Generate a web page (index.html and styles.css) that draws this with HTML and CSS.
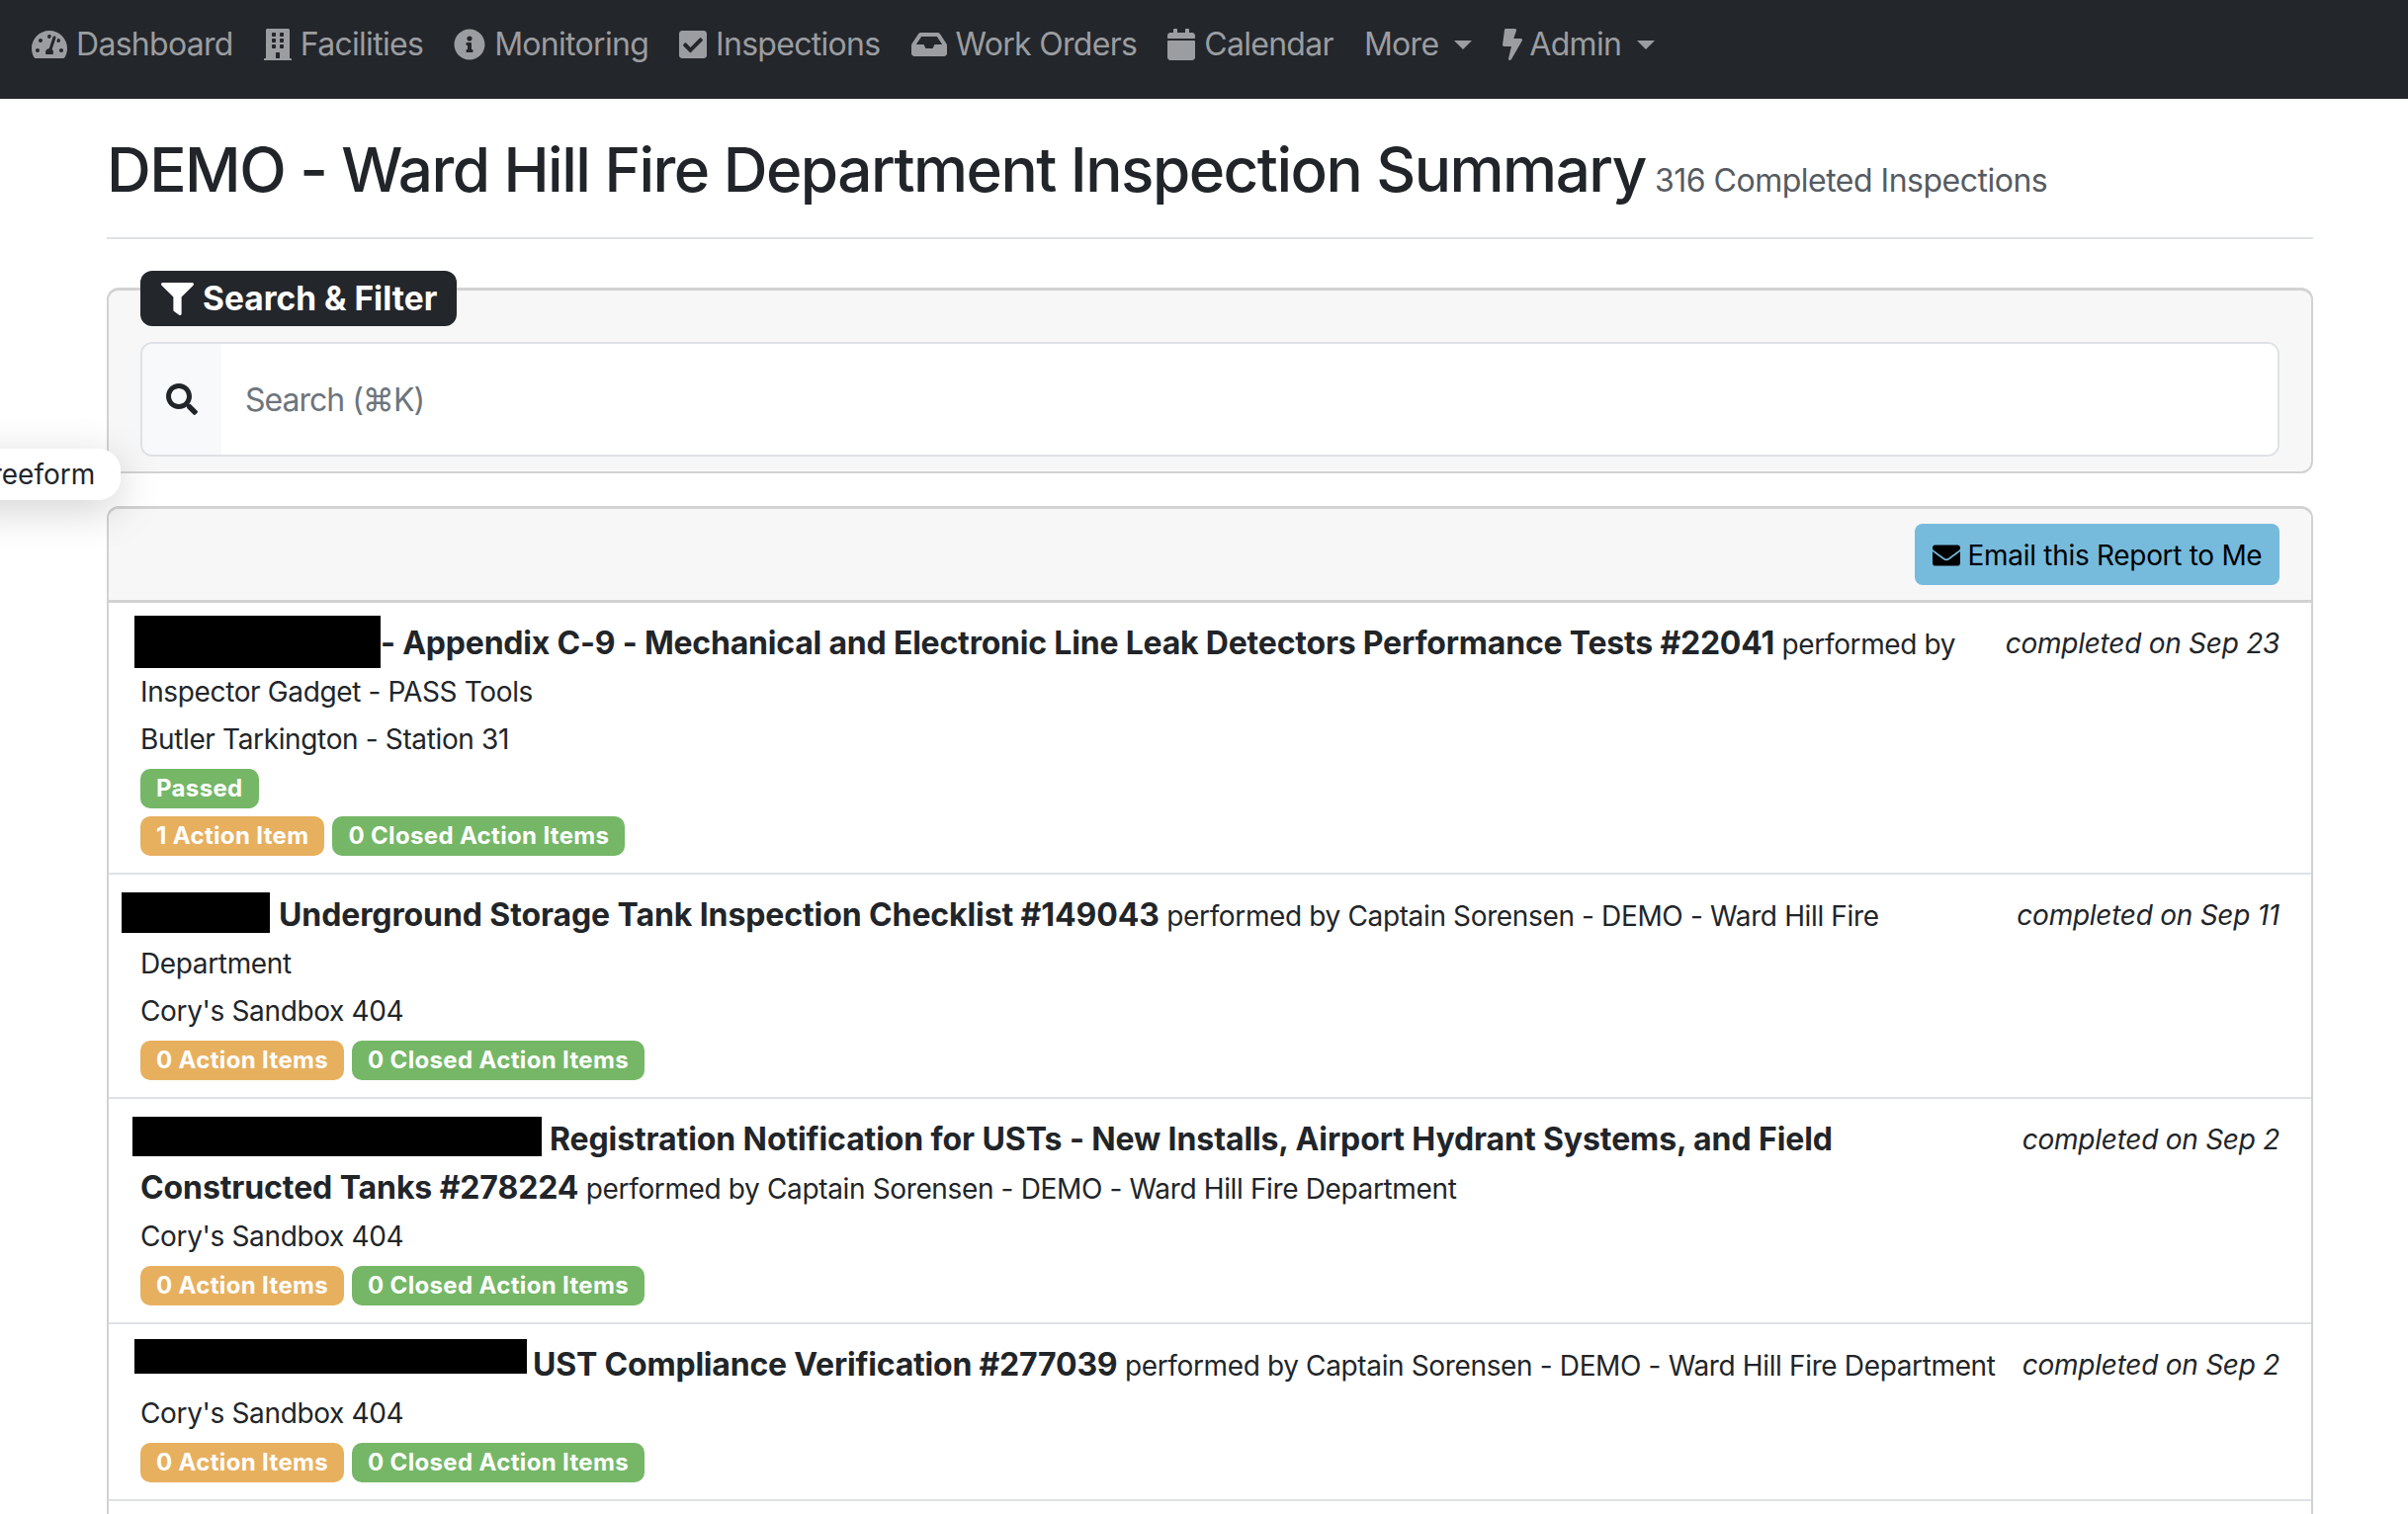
FILE: index.html
```html
<!DOCTYPE html>
<html lang="en">
<head>
    <meta charset="UTF-8">
    <meta name="viewport" content="width=device-width, initial-scale=1.0">
    <title>Inspection Summary</title>
    <link rel="stylesheet" href="styles.css">
</head>
<body>
    <!-- Top navigation -->
    <nav class="navbar">
        <a class="nav-link"><svg class="icon icon-dash" viewBox="0 0 576 512"><path d="M288 32C128.94 32 0 160.94 0 320c0 52.8 14.25 102.26 39.06 144.8 5.61 9.62 16.3 15.2 27.44 15.2h443c11.14 0 21.83-5.58 27.44-15.2C561.75 422.26 576 372.8 576 320c0-159.06-128.94-288-288-288zm0 64c14.71 0 26.58 10.13 30.32 23.65-1.11 2.26-2.64 4.23-3.45 6.67l-9.22 27.67c-5.13 3.49-10.97 6.01-17.64 6.01-17.67 0-32-14.33-32-32S270.33 96 288 96zM96 384c-17.67 0-32-14.33-32-32s14.33-32 32-32 32 14.33 32 32-14.33 32-32 32zm48-160c-17.67 0-32-14.33-32-32s14.33-32 32-32 32 14.33 32 32-14.33 32-32 32zm246.77-72.41l-61.33 184C343.13 347.33 352 364.54 352 384c0 11.72-3.38 22.55-8.88 32H232.88c-5.5-9.45-8.88-20.28-8.88-32 0-33.94 26.5-61.43 59.9-63.59l61.34-184.01c4.17-12.56 17.73-19.45 30.36-15.17 12.57 4.19 19.35 17.77 15.17 30.36zm14.66 57.2l15.52-46.55c3.47-1.29 7.13-2.23 11.05-2.23 17.67 0 32 14.33 32 32s-14.33 32-32 32c-11.38-.01-20.89-6.28-26.57-15.22zM480 384c-17.67 0-32-14.33-32-32s14.33-32 32-32 32 14.33 32 32-14.33 32-32 32z"/></svg>Dashboard</a>
        <a class="nav-link"><svg class="icon icon-tall" viewBox="0 0 448 512"><path d="M436 480h-20V24c0-13.255-10.745-24-24-24H56C42.745 0 32 10.745 32 24v456H12c-6.627 0-12 5.373-12 12v20h448v-20c0-6.627-5.373-12-12-12zM128 76c0-6.627 5.373-12 12-12h40c6.627 0 12 5.373 12 12v40c0 6.627-5.373 12-12 12h-40c-6.627 0-12-5.373-12-12V76zm0 96c0-6.627 5.373-12 12-12h40c6.627 0 12 5.373 12 12v40c0 6.627-5.373 12-12 12h-40c-6.627 0-12-5.373-12-12v-40zm52 148h-40c-6.627 0-12-5.373-12-12v-40c0-6.627 5.373-12 12-12h40c6.627 0 12 5.373 12 12v40c0 6.627-5.373 12-12 12zm76 160h-64v-84c0-6.627 5.373-12 12-12h40c6.627 0 12 5.373 12 12v84zm64-172c0 6.627-5.373 12-12 12h-40c-6.627 0-12-5.373-12-12v-40c0-6.627 5.373-12 12-12h40c6.627 0 12 5.373 12 12v40zm0-96c0 6.627-5.373 12-12 12h-40c-6.627 0-12-5.373-12-12v-40c0-6.627 5.373-12 12-12h40c6.627 0 12 5.373 12 12v40zm0-96c0 6.627-5.373 12-12 12h-40c-6.627 0-12-5.373-12-12V76c0-6.627 5.373-12 12-12h40c6.627 0 12 5.373 12 12v40z"/></svg>Facilities</a>
        <a class="nav-link"><svg class="icon icon-info" viewBox="0 0 512 512"><path d="M256 8C119.043 8 8 119.083 8 256c0 136.997 111.043 248 248 248s248-111.003 248-248C504 119.083 392.957 8 256 8zm0 110c23.196 0 42 18.804 42 42s-18.804 42-42 42-42-18.804-42-42 18.804-42 42-42zm56 254c0 6.627-5.373 12-12 12h-88c-6.627 0-12-5.373-12-12v-24c0-6.627 5.373-12 12-12h12v-64h-12c-6.627 0-12-5.373-12-12v-24c0-6.627 5.373-12 12-12h64c6.627 0 12 5.373 12 12v100h12c6.627 0 12 5.373 12 12v24z"/></svg>Monitoring</a>
        <a class="nav-link"><svg class="icon icon-tall" viewBox="0 0 448 512"><path d="M400 480H48c-26.51 0-48-21.49-48-48V80c0-26.51 21.49-48 48-48h352c26.51 0 48 21.49 48 48v352c0 26.51-21.49 48-48 48zm-204.686-98.059l184-184c6.248-6.248 6.248-16.379 0-22.627l-22.627-22.627c-6.248-6.248-16.379-6.249-22.628 0L184 302.745l-69.059-69.059c-6.248-6.248-16.379-6.248-22.628 0L69.686 256.313c-6.248 6.248-6.248 16.379 0 22.627l104 104c6.249 6.25 16.379 6.25 22.628.001z"/></svg>Inspections</a>
        <a class="nav-link"><svg class="icon icon-inbox" viewBox="0 0 576 512"><path d="M567.938 243.908L462.25 85.374A48.003 48.003 0 0 0 422.311 64H153.689a48 48 0 0 0-39.938 21.374L8.062 243.908A47.994 47.994 0 0 0 0 270.533V400c0 26.51 21.49 48 48 48h480c26.51 0 48-21.49 48-48V270.533a47.994 47.994 0 0 0-8.062-26.625zM162.252 128h251.497l85.333 128H376l-32 64H232l-32-64H76.918l85.334-128z"/></svg>Work Orders</a>
        <a class="nav-link"><svg class="icon icon-tall" viewBox="0 0 448 512"><path d="M12 192h424c6.6 0 12 5.4 12 12v260c0 26.5-21.5 48-48 48H48c-26.5 0-48-21.5-48-48V204c0-6.6 5.4-12 12-12zm436-44v-36c0-26.5-21.5-48-48-48h-48V12c0-6.6-5.4-12-12-12h-40c-6.6 0-12 5.4-12 12v52H160V12c0-6.6-5.4-12-12-12h-40c-6.6 0-12 5.4-12 12v52H48C21.5 64 0 85.5 0 112v36c0 6.6 5.4 12 12 12h424c6.6 0 12-5.4 12-12z"/></svg>Calendar</a>
        <a class="nav-link dropdown">More</a>
        <a class="nav-link dropdown"><svg class="icon icon-bolt" viewBox="0 0 320 512"><path d="M296 160H180.6l42.6-129.8C227.2 15 215.7 0 200 0H56C44 0 33.8 8.9 32.2 20.8l-32 240C-1.7 275.2 9.5 288 24 288h118.7L96.6 482.5c-3.6 15.2 8 29.5 23.3 29.5 8.4 0 16.4-4.4 20.8-12l176-304c9.3-15.9-2.2-36-20.7-36z"/></svg>Admin</a>
    </nav>

    <div class="tooltip">Freeform</div>

    <main class="container">
        <h1 class="page-title">DEMO - Ward Hill Fire Department Inspection Summary <small>316 Completed Inspections</small></h1>

        <!-- Search & filter -->
        <section class="filter-box">
            <div class="legend"><svg class="icon-filter" viewBox="0 0 512 512"><path d="M487.976 0H24.028C2.71 0-8.047 25.866 7.058 40.971L192 225.941V432c0 7.831 3.821 15.17 10.237 19.662l80 55.98C298.02 518.69 320 507.493 320 487.98V225.941l184.947-184.97C520.021 25.896 509.338 0 487.976 0z"/></svg>Search &amp; Filter</div>
            <div class="search-group">
                <span class="search-addon"><svg class="icon-search" viewBox="0 0 512 512"><path d="M505 442.7L405.3 343c-4.5-4.5-10.6-7-17-7H372c27.6-35.3 44-79.7 44-128C416 93.1 322.9 0 208 0S0 93.1 0 208s93.1 208 208 208c48.3 0 92.7-16.4 128-44v16.3c0 6.4 2.5 12.5 7 17l99.7 99.7c9.4 9.4 24.6 9.4 33.9 0l28.3-28.3c9.4-9.4 9.4-24.6.1-34zM208 336c-70.7 0-128-57.2-128-128 0-70.7 57.2-128 128-128 70.7 0 128 57.2 128 128 0 70.7-57.2 128-128 128z"/></svg></span>
                <input class="search-input" type="text" placeholder="Search (⌘K)">
            </div>
        </section>

        <!-- Report list -->
        <section class="report-card">
            <div class="report-header">
                <button class="btn-email"><svg class="icon-mail" viewBox="0 0 512 512"><path d="M502.3 190.8c3.9-3.1 9.7-.2 9.7 4.7V400c0 26.5-21.5 48-48 48H48c-26.5 0-48-21.5-48-48V195.6c0-5 5.7-7.8 9.7-4.7 22.4 17.4 52.1 39.5 154.1 113.6 21.1 15.4 56.7 47.8 92.2 47.6 35.7.3 72-32.8 92.3-47.6 102-74.1 131.6-96.3 154-113.7zM256 320c23.2.4 56.6-29.2 73.4-41.4 132.7-96.3 142.8-104.7 173.4-128.7 5.8-4.5 9.2-11.5 9.2-18.9v-19c0-26.5-21.5-48-48-48H48C21.5 64 0 85.5 0 112v19c0 7.4 3.4 14.3 9.2 18.9 30.6 23.9 40.7 32.4 173.4 128.7 16.8 12.2 50.2 41.8 73.4 41.4z"/></svg>Email this Report to Me</button>
            </div>
            <ul class="report-list">
                <li class="report-row">
                    <em class="completed">completed on Sep 23</em>
                    <div><span class="redact redact-1"></span><strong class="report-title tight">- Appendix C-9 - Mechanical and Electronic Line Leak Detectors Performance Tests #22041</strong> performed by Inspector Gadget - PASS Tools</div>
                    <div>Butler Tarkington - Station 31</div>
                    <div class="badges"><span class="badge green">Passed</span></div>
                    <div class="badges"><span class="badge orange">1 Action Item</span><span class="badge green">0 Closed Action Items</span></div>
                </li>
                <li class="report-row">
                    <em class="completed">completed on Sep 11</em>
                    <div><span class="redact redact-2"></span><strong class="report-title">Underground Storage Tank Inspection Checklist #149043</strong> performed by Captain Sorensen - DEMO - Ward Hill Fire Department</div>
                    <div>Cory's Sandbox 404</div>
                    <div class="badges"><span class="badge orange">0 Action Items</span><span class="badge green">0 Closed Action Items</span></div>
                </li>
                <li class="report-row">
                    <em class="completed">completed on Sep 2</em>
                    <div><span class="redact redact-3"></span><strong class="report-title">Registration Notification for USTs - New Installs, Airport Hydrant Systems, and Field Constructed Tanks #278224</strong> performed by Captain Sorensen - DEMO - Ward Hill Fire Department</div>
                    <div>Cory's Sandbox 404</div>
                    <div class="badges"><span class="badge orange">0 Action Items</span><span class="badge green">0 Closed Action Items</span></div>
                </li>
                <li class="report-row">
                    <em class="completed">completed on Sep 2</em>
                    <div><span class="redact redact-4"></span><strong class="report-title tight">UST Compliance Verification #277039</strong> performed by Captain Sorensen - DEMO - Ward Hill Fire Department</div>
                    <div>Cory's Sandbox 404</div>
                    <div class="badges"><span class="badge orange">0 Action Items</span><span class="badge green">0 Closed Action Items</span></div>
                </li>
                <li class="report-row report-row-empty"></li>
            </ul>
        </section>
    </main>
</body>
</html>
```

FILE: styles.css
```css
html, body {
    height: 100%;
}
body {
    margin: 0;
    font-family: Inter, "Liberation Sans", sans-serif;
    font-size: 28px;
    line-height: 48px;
    letter-spacing: -0.36px;
    color: #212529;
    background: #fff;
    overflow: hidden;
    position: relative;
}

/* Navbar */
.navbar {
    height: 100px;
    box-sizing: border-box;
    background: #23262b;
    display: flex;
    gap: 31px;
    padding: 21px 31px 0 32px;
    align-items: flex-start;
}
.nav-link {
    color: #9b9da0;
    font-size: 32px;
    letter-spacing: -0.7px;
    display: flex;
    align-items: center;
    white-space: nowrap;
}
.icon {
    fill: #9b9da0;
    height: 32px;
    margin-right: 9px;
}
.icon-dash { width: 36px; }
.icon-tall { width: 28px; }
.icon-info { width: 32px; }
.icon-inbox { width: 36px; }
.icon-bolt { width: 20px; height: 32px; margin-right: 7px; }
.dropdown::after {
    content: "";
    margin-left: 16px;
    border-top: 9px solid #9b9da0;
    border-left: 9px solid transparent;
    border-right: 9px solid transparent;
}

/* Freeform tooltip from the desktop */
.tooltip {
    position: absolute;
    left: -50px;
    top: 454px;
    height: 52px;
    line-height: 52px;
    padding: 0 26px;
    background: #fff;
    letter-spacing: 0;
    border-radius: 22px;
    box-shadow: 0 10px 44px rgba(0, 0, 0, 0.18);
    z-index: 5;
}

.container {
    padding: 0 96px 0 108px;
}
.page-title {
    margin: 0;
    padding: 33px 0 18px;
    font-size: 62px;
    line-height: 78px;
    font-weight: 550;
    letter-spacing: -1.52px;
    border-bottom: 2px solid #dee2e6;
    white-space: nowrap;
}
.page-title small {
    font-size: 32px;
    font-weight: 400;
    letter-spacing: -0.5px;
    margin-left: -6px;
    color: #555b61;
}

/* Search & filter */
.filter-box {
    margin-top: 49px;
    height: 188px;
    box-sizing: border-box;
    background: #f7f7f7;
    border: 2px solid #d2d2d2;
    border-top-width: 3px;
    border-radius: 12px;
    padding: 0 32px;
    position: relative;
}
.legend {
    position: absolute;
    left: 32px;
    top: -20px;
    width: 320px;
    height: 56px;
    box-sizing: border-box;
    background: #23262b;
    color: #fff;
    font-size: 33.5px;
    font-weight: 700;
    letter-spacing: 0;
    line-height: 56px;
    border-radius: 12px;
    padding-left: 21px;
    display: flex;
    align-items: center;
}
.icon-filter {
    width: 33px;
    height: 33px;
    fill: #fff;
    margin-right: 9px;
}
.search-group {
    display: flex;
    height: 116px;
    margin-top: 52px;
    box-sizing: border-box;
    border: 2px solid #dee2e6;
    border-radius: 12px;
    background: #fff;
    overflow: hidden;
}
.search-addon {
    width: 80px;
    background: #f8f9fa;
    display: flex;
    align-items: center;
    justify-content: center;
}
.icon-search {
    width: 32px;
    height: 32px;
    fill: #212529;
}
.search-input {
    flex: 1;
    border: none;
    outline: none;
    padding: 0 24px;
    font-family: inherit;
    font-size: 32px;
    letter-spacing: -1px;
    background: #fff;
}
.search-input::placeholder {
    color: #6c757d;
    opacity: 1;
}

/* Report card */
.report-card {
    margin-top: 33px;
    border: 2px solid #d2d2d2;
    border-top-width: 3px;
    border-bottom: none;
    border-radius: 12px 12px 0 0;
}
.report-header {
    height: 95px;
    box-sizing: border-box;
    background: #f7f7f7;
    border-bottom: 3px solid #d2d2d2;
    border-radius: 10px 10px 0 0;
    display: flex;
    justify-content: flex-end;
    padding: 15px 32px 0;
}
.btn-email {
    width: 369px;
    height: 62px;
    border: none;
    border-radius: 8px;
    background: #76bbdc;
    color: #000;
    font-family: inherit;
    font-size: 28px;
    letter-spacing: -0.3px;
    display: flex;
    align-items: center;
    justify-content: center;
    padding: 2px 0 0 0;
}
.icon-mail {
    width: 28px;
    height: 28px;
    margin-right: 8px;
}
.report-list {
    list-style: none;
    margin: 0;
    padding: 0;
}
.report-row {
    padding: 17px 32px 15px;
    border-bottom: 2px solid #dee2e6;
}
.report-row-empty {
    height: 80px;
    border-bottom: none;
}
.report-title {
    font-size: 32px;
    font-weight: 700;
    letter-spacing: -0.1px;
}
.report-title.tight {
    letter-spacing: -0.2px;
}
.completed {
    float: right;
    margin-left: 14px;
    letter-spacing: -0.26px;
}
.badges {
    height: 48px;
    box-sizing: border-box;
    padding-top: 3px;
    display: flex;
    gap: 8px;
    align-items: center;
}
.badge {
    height: 40px;
    line-height: 40px;
    padding: 0 16px;
    border-radius: 10px;
    color: #fff;
    font-size: 24px;
    font-weight: 700;
    letter-spacing: 0.34px;
    white-space: nowrap;
}
.green { background: #75b767; }
.orange { background: #e7b05f; }

/* Black redaction bars over the facility names */
.redact {
    display: inline-block;
    background: #000;
}
.redact-1 { width: 249px; height: 53px; margin: -39px 0 -14px -6px; }
.redact-2 { width: 150px; height: 41px; margin: -34px 9px -7px -19px; }
.redact-3 { width: 414px; height: 40px; margin: -34px 8px -6px -8px; }
.redact-4 { width: 397px; height: 35px; margin: -37px 6px 2px -6px; }
```
